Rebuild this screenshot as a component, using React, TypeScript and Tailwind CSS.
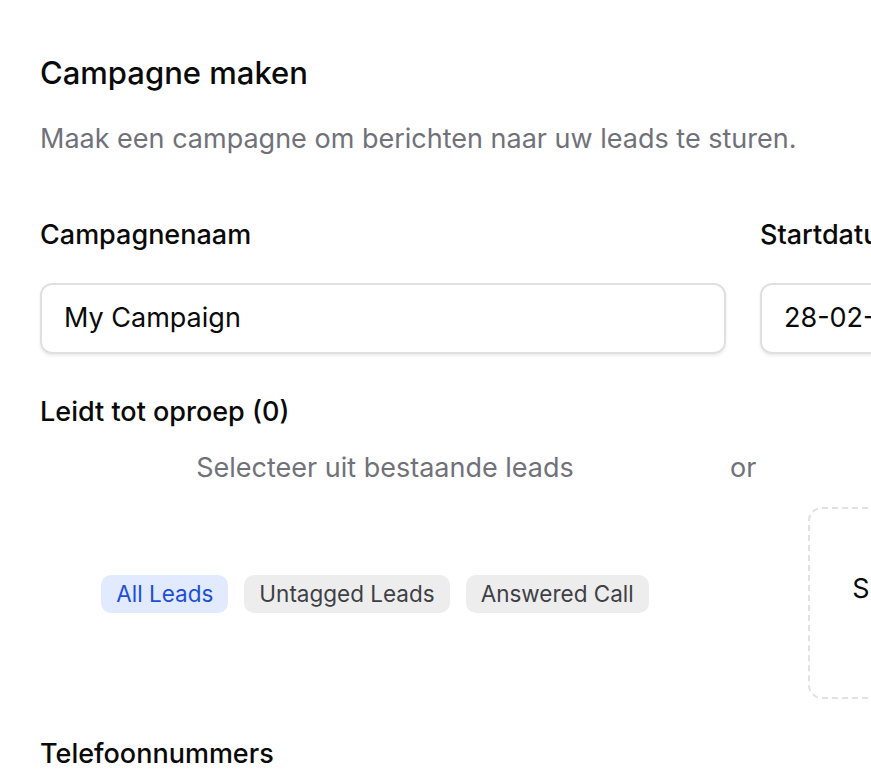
import React from "react";

export default function App() {
  return (
    <div className="w-[871px] h-[777px] overflow-hidden bg-white" style={{ fontFamily: "Inter, 'Noto Sans', sans-serif" }}>
      <div className="w-[1480px] pl-[40px] pt-[54px]">
        <h1 className="text-[31px] leading-[38px] font-medium text-[#0a0a0a]">Campagne maken</h1>
        <p className="mt-[30px] text-[27px] leading-[34px] text-[#71717a]">Maak een campagne om berichten naar uw leads te sturen.</p>

        <div className="mt-[63px] flex gap-[34px]">
          <div className="w-[686px] flex flex-col">
            <label className="text-[27px] leading-[32px] font-medium text-[#0a0a0a]">Campagnenaam</label>
            <div className="mt-[32px] h-[71px] rounded-[12px] border-2 border-[#e0e0e0] shadow-[0_2px_3px_rgba(0,0,0,0.08)] flex items-center px-[22px] text-[27px] text-[#0a0a0a]">
              My Campaign
            </div>
          </div>
          <div className="w-[686px] flex flex-col">
            <label className="text-[27px] leading-[32px] font-medium text-[#0a0a0a]">Startdatum</label>
            <div className="mt-[32px] h-[71px] rounded-[12px] border-2 border-[#e0e0e0] shadow-[0_2px_3px_rgba(0,0,0,0.08)] flex items-center px-[22px] text-[27px] text-[#0a0a0a]">
              28-02-2025
            </div>
          </div>
        </div>

        <div className="mt-[42px] text-[27px] leading-[32px] font-medium text-[#0a0a0a]">Leidt tot oproep (0)</div>

        <div className="mt-[24px] flex items-start">
          <div className="w-[690px] flex flex-col items-center">
            <div className="text-[27px] leading-[32px] text-[#71717a]">Selecteer uit bestaande leads</div>
            <div className="mt-[23px] h-[174px] flex items-center gap-[16px] pr-[20px]">
              <span className="h-[38px] px-[15px] rounded-[10px] bg-[#e1eafe] text-[#1d4ed8] text-[22.5px] flex items-center">All Leads</span>
              <span className="h-[38px] px-[15px] rounded-[10px] bg-[#ededed] text-[#3f3f46] text-[22.5px] flex items-center">Untagged Leads</span>
              <span className="h-[38px] px-[15px] rounded-[10px] bg-[#ededed] text-[#3f3f46] text-[22.5px] flex items-center">Answered Call</span>
            </div>
          </div>
          <div className="text-[27px] leading-[32px] text-[#71717a]">or</div>
          <div className="ml-[52px] w-[600px] flex flex-col items-center">
            <div className="text-[27px] leading-[32px] text-[#71717a]">Upload CSV-bestand</div>
            <div className="mt-[23px] w-full h-[192px] rounded-[14px] border-2 border-dashed border-[#e2e2e2] flex items-start pt-[60px] pl-[42px] text-[27px] text-[#0a0a0a]">
              Sleep een bestand hierheen
            </div>
          </div>
        </div>

        <div className="mt-[39px] text-[27px] leading-[32px] font-medium text-[#0a0a0a]">Telefoonnummers</div>
      </div>
    </div>
  );
}
